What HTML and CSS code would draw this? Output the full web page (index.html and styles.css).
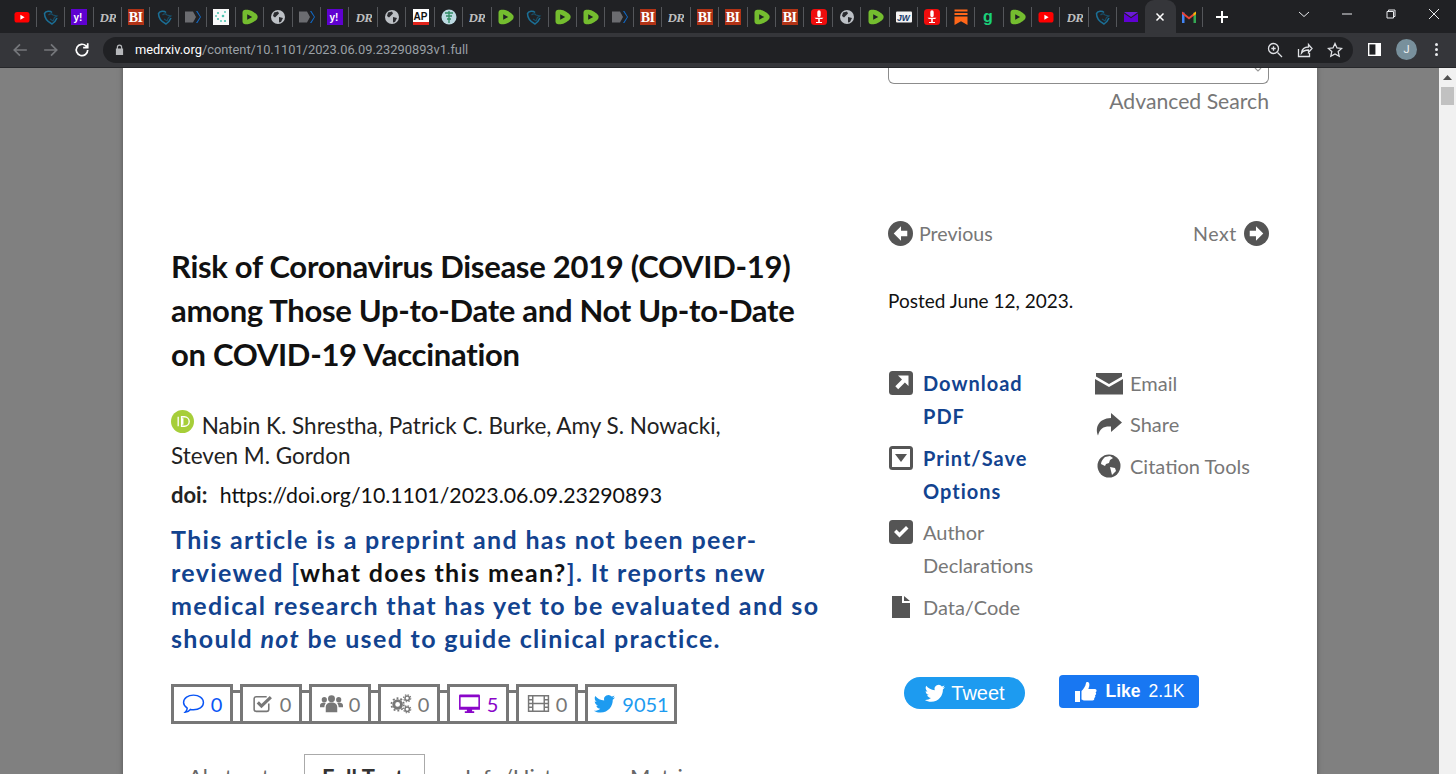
FILE: index.html
```html
<!DOCTYPE html>
<html lang="en">
<head>
<meta charset="utf-8">
<title>Risk of Coronavirus Disease 2019 (COVID-19)</title>
<link rel="stylesheet" href="styles.css">
</head>
<body>
<svg class="defs" width="0" height="0" aria-hidden="true">
  <symbol id="yt" viewBox="0 0 16 16"><rect x="0.5" y="3" width="15" height="10.5" rx="2.6" fill="#f00"/><path d="M6.4 5.8v4.9l4.2-2.45z" fill="#fff"/></symbol>
  <symbol id="shield" viewBox="0 0 16 16"><path d="M9 3.500C7 1.500 3 2 1.500 4.500 1.500 9 4 12.500 9 15c2-1.500 4-3.500 5-6" fill="none" stroke="#1b6f96" stroke-width="1.500"/><path d="M5.500 6C7 4.500 9 4.500 10 6l4 1-2.500 1.500L10 12 7 10" fill="none" stroke="#174e68" stroke-width="1.100"/></symbol>
  <symbol id="yh" viewBox="0 0 16 16"><rect width="16" height="16" fill="#5f01d1"/><text x="2.5" y="11.5" class="ft yh">y!</text></symbol>
  <symbol id="dr" viewBox="0 0 16 16"><text x="-0.5" y="12.500" class="ft dr">DR</text></symbol>
  <symbol id="bi" viewBox="0 0 16 16"><rect width="16" height="16" fill="#b23316"/><text x="0.7" y="13.2" class="ft bi">BI</text></symbol>
  <symbol id="ms" viewBox="0 0 16 16"><path d="M0 2.5h8l3 5.5-3 5.5H0z" fill="#6b6c70"/><path d="M11 2l4 6-4 6h1.4l3.6-6-3.6-6z" fill="#1168c4"/></symbol>
  <symbol id="mol" viewBox="0 0 16 16"><rect width="16" height="16" fill="#fafafa"/><g fill="#4cc3b0"><circle cx="5" cy="4" r="1.1"/><circle cx="10" cy="7" r="1.3"/><circle cx="5" cy="10" r="1.1"/><circle cx="12" cy="12" r="1.1"/><circle cx="8" cy="12" r="0.9"/><circle cx="12" cy="3" r="0.9"/><circle cx="3" cy="7" r="0.9"/></g></symbol>
  <symbol id="rm" viewBox="0 0 16 16"><path d="M3.3 0.8h2.4c3 0 8.5 3.6 9.5 5.5.6 1.1.6 2.3 0 3.4-1 1.9-6.500 5.500-9.500 5.500H3.300C1.800 15.200 0.500 14 0.500 12.500v-9C0.500 2 1.800 0.800 3.300 0.800z" fill="#74bd2f"/><path d="M5.200 5.200v5.600L10.200 8z" fill="#1f2024"/></symbol>
  <symbol id="gl" viewBox="0 0 16 16"><circle cx="8" cy="8" r="7" fill="#bdc1c6"/><path d="M4 3.500l4-1 1 2-2.500 2.500-1.500 1.500-2-1.500zM9 8l4 1-2 4-2 .5z" fill="#2a2b2f"/></symbol>
  <symbol id="ap" viewBox="0 0 16 16"><rect width="16" height="16" fill="#fff"/><rect y="13" width="16" height="3" fill="#e2231a"/><text x="0.6" y="11.200" class="ft ap">AP</text></symbol>
  <symbol id="med" viewBox="0 0 16 16"><circle cx="8" cy="8" r="7.500" fill="#bcd9e2"/><path d="M8 2v12M4 4h8M5 7h6M6 10h4" stroke="#2f8b63" stroke-width="1.300"/></symbol>
  <symbol id="red" viewBox="0 0 16 16"><rect width="16" height="16" rx="3.500" fill="#ef0d0d"/><path d="M6.300 3a1.700 1.700 0 013.400 0v3.500a1.700 1.700 0 01-3.400 0zM3.500 8.800h9L11 10H5zM7.200 10h1.600v3.800H7.200zM5 13h6v1H5z" fill="#fff"/></symbol>
  <symbol id="jw" viewBox="0 0 16 16"><rect y="2.500" width="16" height="11" rx="1" fill="#f4f4f4"/><text x="1" y="11.500" class="ft jw">JW</text></symbol>
  <symbol id="sub" viewBox="0 0 16 16"><path d="M1.500 0.500h13v2h-13zM1.500 4h13v2h-13zM1.500 7.500h13V16L8 12.300 1.500 16z" fill="#ff6719"/></symbol>
  <symbol id="g" viewBox="0 0 16 16"><text x="2" y="12.500" class="ft gg">g</text></symbol>
  <symbol id="mail" viewBox="0 0 16 16"><path d="M1 3h14L8 8z" fill="#6b1bd6"/><path d="M1 4.500l7 4.800 7-4.800V13H1z" fill="#6001d2"/></symbol>
  <symbol id="gm" viewBox="0 0 16 16"><path d="M1 3.500h2.500V14H1z" fill="#4285f4"/><path d="M12.500 3.500H15V14h-2.500z" fill="#34a853"/><path d="M1 2.500l7 5.500 7-5.500V5L8 10.500 1 5z" fill="#ea4335"/><path d="M12.500 4.500L15 2.500V5l-2.500 2z" fill="#fbbc04"/></symbol>
</svg>

<header class="chrome">
  <div class="tabstrip">
    <div class="tab"><svg class="fav"><use href="#yt"/></svg></div>
    <div class="tab"><svg class="fav"><use href="#shield"/></svg></div>
    <div class="tab"><svg class="fav"><use href="#yh"/></svg></div>
    <div class="tab"><svg class="fav"><use href="#dr"/></svg></div>
    <div class="tab"><svg class="fav"><use href="#bi"/></svg></div>
    <div class="tab"><svg class="fav"><use href="#shield"/></svg></div>
    <div class="tab"><svg class="fav"><use href="#ms"/></svg></div>
    <div class="tab"><svg class="fav"><use href="#mol"/></svg></div>
    <div class="tab"><svg class="fav"><use href="#rm"/></svg></div>
    <div class="tab"><svg class="fav"><use href="#gl"/></svg></div>
    <div class="tab"><svg class="fav"><use href="#ms"/></svg></div>
    <div class="tab"><svg class="fav"><use href="#yh"/></svg></div>
    <div class="tab"><svg class="fav"><use href="#dr"/></svg></div>
    <div class="tab"><svg class="fav"><use href="#gl"/></svg></div>
    <div class="tab"><svg class="fav"><use href="#ap"/></svg></div>
    <div class="tab"><svg class="fav"><use href="#med"/></svg></div>
    <div class="tab"><svg class="fav"><use href="#dr"/></svg></div>
    <div class="tab"><svg class="fav"><use href="#rm"/></svg></div>
    <div class="tab"><svg class="fav"><use href="#shield"/></svg></div>
    <div class="tab"><svg class="fav"><use href="#rm"/></svg></div>
    <div class="tab"><svg class="fav"><use href="#rm"/></svg></div>
    <div class="tab"><svg class="fav"><use href="#ms"/></svg></div>
    <div class="tab"><svg class="fav"><use href="#bi"/></svg></div>
    <div class="tab"><svg class="fav"><use href="#dr"/></svg></div>
    <div class="tab"><svg class="fav"><use href="#bi"/></svg></div>
    <div class="tab"><svg class="fav"><use href="#bi"/></svg></div>
    <div class="tab"><svg class="fav"><use href="#rm"/></svg></div>
    <div class="tab"><svg class="fav"><use href="#bi"/></svg></div>
    <div class="tab"><svg class="fav"><use href="#red"/></svg></div>
    <div class="tab"><svg class="fav"><use href="#gl"/></svg></div>
    <div class="tab"><svg class="fav"><use href="#rm"/></svg></div>
    <div class="tab"><svg class="fav"><use href="#jw"/></svg></div>
    <div class="tab"><svg class="fav"><use href="#red"/></svg></div>
    <div class="tab"><svg class="fav"><use href="#sub"/></svg></div>
    <div class="tab"><svg class="fav"><use href="#g"/></svg></div>
    <div class="tab"><svg class="fav"><use href="#rm"/></svg></div>
    <div class="tab"><svg class="fav"><use href="#yt"/></svg></div>
    <div class="tab"><svg class="fav"><use href="#dr"/></svg></div>
    <div class="tab"><svg class="fav"><use href="#shield"/></svg></div>
    <div class="tab tab-clear"><svg class="fav"><use href="#mail"/></svg></div>
    <div class="tab tab-active"><svg class="close-x" viewBox="0 0 10 10"><path d="M1.500 1.500l7 7M8.500 1.500l-7 7"/></svg></div>
    <div class="tab"><svg class="fav"><use href="#gm"/></svg></div>
    <div class="newtab"><svg viewBox="0 0 12 12"><path d="M6 0v12M0 6h12"/></svg></div>
    <div class="winbtns">
      <svg class="win" viewBox="0 0 12 12"><path d="M1 4l5 4.500L11 4"/></svg>
      <svg class="win" viewBox="0 0 12 12"><path d="M1 6h10"/></svg>
      <svg class="win" viewBox="0 0 12 12"><path d="M2 3.500h6.500V10H2zM3.500 3.500V2h6.500v6.500H8.500"/></svg>
      <svg class="win" viewBox="0 0 12 12"><path d="M1 1l10 10M11 1L1 11"/></svg>
    </div>
  </div>
  <div class="toolbar">
    <svg class="nav dim" viewBox="0 0 14 14"><path d="M13 7H2M7 2L2 7l5 5"/></svg>
    <svg class="nav dim" viewBox="0 0 14 14"><path d="M1 7h11M7 2l5 5-5 5"/></svg>
    <svg class="nav" viewBox="0 0 14 14"><path d="M12 7a5 5 0 11-1.500-3.600L12 5M12 1v4H8"/></svg>
    <div class="omnibox">
      <svg class="lock" viewBox="0 0 10 12"><path d="M2 5V3.500a3 3 0 016 0V5h1v7H1V5zM3.300 5h3.400V3.500a1.700 1.700 0 00-3.400 0z"/></svg>
      <span class="url"><span class="host">medrxiv.org</span>/content/10.1101/2023.06.09.23290893v1.full</span>
      <div class="omni-icons">
        <svg class="tool" viewBox="0 0 16 16"><circle cx="6.500" cy="6.500" r="5"/><path d="M10.500 10.500L15 15M4.300 6.500h4.400M6.500 4.300v4.400"/></svg>
        <svg class="tool" viewBox="0 0 16 16"><path d="M1.500 7v7.500h11V11M4.500 11c.5-4 3-6 7-6V2.500L15 6.500l-3.500 4V8c-3 0-5.500 1-7 3z"/></svg>
        <svg class="tool" viewBox="0 0 16 16"><path d="M8 1.500l2 4.400 4.700.5-3.500 3.200 1 4.700L8 11.900l-4.200 2.400 1-4.700L1.300 6.400 6 5.900z"/></svg>
      </div>
    </div>
    <div class="tb-right">
      <svg class="panel" viewBox="0 0 14 14"><rect x="0.750" y="0.750" width="12.500" height="12.500" fill="#202124" stroke="#fff" stroke-width="1.500"/><rect x="8" y="1" width="5" height="12" fill="#fff"/></svg>
      <span class="avatar">J</span>
      <span class="dots"><i></i><i></i><i></i></span>
    </div>
  </div>
</header>

<div class="viewport">
  <div class="backdrop">
    <main class="page">
      <article class="article">
        <h1 class="title">Risk of Coronavirus Disease 2019 (COVID-19) among Those Up-to-Date and Not Up-to-Date on COVID-19 Vaccination</h1>
        <p class="authors"><svg class="orcid" viewBox="0 0 24 24"><circle cx="12" cy="12" r="12" fill="#a6ce39"/><path d="M7.500 7v10M11 7h3a5 5 0 010 10h-3zM12.300 8.500v7" fill="none" stroke="#fff" stroke-width="1.400"/></svg> Nabin K. Shrestha, Patrick C. Burke, Amy S. Nowacki, Steven M. Gordon</p>
        <p class="doi"><b>doi:</b> https://doi.org/10.1101/2023.06.09.23290893</p>
        <p class="notice">This article is a preprint and has not been peer-reviewed [<span class="notice-link">what does this mean?</span>]. It reports new medical research that has yet to be evaluated and so should <em>not</em> be used to guide clinical practice.</p>
        <div class="badges">
          <div class="badge b-blue"><svg viewBox="0 0 22 22"><path d="M11 3c5 0 9.500 2.500 9.500 7s-4.500 7-9.500 7c-1 0-2 0-3-.300C6.500 18.500 4.500 19.500 3 19.500c1-1 2-2.500 2-4C3 14 1.500 12.500 1.500 10 1.500 5.500 6 3 11 3z" fill="none" stroke="currentColor" stroke-width="1.400"/></svg>0</div>
          <div class="badge"><svg viewBox="0 0 22 22"><path d="M17 11v5.500a2 2 0 01-2 2H5a2 2 0 01-2-2V6.500a2 2 0 012-2h10" fill="none" stroke="currentColor" stroke-width="1.500"/><path d="M6.500 10l3.500 3.500L19 5" fill="none" stroke="currentColor" stroke-width="3"/></svg>0</div>
          <div class="badge"><svg viewBox="0 0 24 22"><g fill="currentColor"><circle cx="12" cy="6" r="3.600"/><circle cx="4.500" cy="7" r="2.700"/><circle cx="19.500" cy="7" r="2.700"/><path d="M6 20v-5c0-3 2-5 6-5s6 2 6 5v5zM0 15v-2c0-2 2-3 4.500-3l1.500.500C5 12 4.500 13.500 4.500 15zM24 15v-2c0-2-2-3-4.500-3l-1.500.500c1 1.500 1.500 3 1.500 4.500z"/></g></svg>0</div>
          <div class="badge"><svg viewBox="0 0 24 22"><g fill="none" stroke="currentColor"><circle cx="9" cy="12" r="4" stroke-width="3"/><circle cx="9" cy="12" r="6.500" stroke-width="1.800" stroke-dasharray="2 2.100"/><circle cx="19" cy="5.500" r="2.300" stroke-width="1.500"/><circle cx="19" cy="5.500" r="3.700" stroke-width="1.200" stroke-dasharray="1.500 1.400"/><circle cx="19" cy="17" r="2.300" stroke-width="1.500"/><circle cx="19" cy="17" r="3.700" stroke-width="1.200" stroke-dasharray="1.500 1.400"/></g></svg>0</div>
          <div class="badge b-purple"><svg viewBox="0 0 22 22"><path fill-rule="evenodd" d="M1 3.500a1 1 0 011-1h18a1 1 0 011 1V17H1zM2.500 5v9h17V5zM8.500 17h5v1.500h2V20h-9v-1.500h2z" fill="currentColor"/></svg>5</div>
          <div class="badge"><svg viewBox="0 0 22 22"><path d="M1.500 3.500h19v15h-19zM5.500 3.500v15M16.500 3.500v15M5.500 11h11M1.500 7.500h4M1.500 11h4M1.500 14.500h4M16.500 7.500h4M16.500 11h4M16.500 14.500h4" fill="none" stroke="currentColor" stroke-width="1.400"/></svg>0</div>
          <div class="badge b-sky"><svg viewBox="0 0 24 24"><path d="M23 5.500c-.8.400-1.700.600-2.600.700.900-.6 1.600-1.400 2-2.500-.900.500-1.800.900-2.900 1.100a4.500 4.500 0 00-7.800 4.100C7.900 8.700 4.600 6.900 2.400 4.200c-1.200 2.100-.6 4.800 1.400 6.100-.7 0-1.400-.2-2-.6 0 2.200 1.500 4.100 3.600 4.500-.7.200-1.400.2-2 .1.600 1.800 2.300 3.100 4.200 3.100C5.700 19 3.200 19.700.9 19.500c2 1.300 4.400 2 6.900 2 8.400 0 13.100-7.100 12.800-13.400.9-.6 1.700-1.500 2.400-2.600z" fill="currentColor"/></svg>9051</div>
        </div>
        <nav class="tabs">
          <a class="tablink">Abstract</a>
          <a class="tablink current">Full Text</a>
          <a class="tablink">Info/History</a>
          <a class="tablink">Metrics</a>
        </nav>
      </article>

      <aside class="side">
        <div class="searchbox"><svg class="search-tip" viewBox="0 0 8 4"><path d="M1 0l3 3 3-3" fill="none" stroke="#999" stroke-width="1.200"/></svg></div>
        <a class="advanced">Advanced Search</a>
        <div class="pager">
          <a class="pg pg-prev"><svg class="circ" viewBox="0 0 24 24"><circle cx="12" cy="12" r="12" fill="#555"/><path d="M12.500 5L5.500 12l7 7v-4.300h6v-5.400h-6z" fill="#fff"/></svg>Previous</a>
          <a class="pg pg-next">Next<svg class="circ" viewBox="0 0 24 24"><circle cx="12" cy="12" r="12" fill="#555"/><path d="M11.500 5l7 7-7 7v-4.300h-6v-5.400h6z" fill="#fff"/></svg></a>
        </div>
        <p class="posted">Posted June 12, 2023.</p>
        <div class="actions">
          <ul class="acol acol-l">
            <li class="act strong"><svg class="aico" viewBox="0 0 24 24"><rect width="24" height="24" rx="3.500" fill="#555"/><path d="M9 4.500h10.500V15l-3.600-3.600-6.700 6.800-2.900-2.900 6.700-6.800z" fill="#fff"/></svg>Download PDF</li>
            <li class="act strong"><svg class="aico" viewBox="0 0 24 24"><rect width="24" height="24" rx="3.500" fill="#555"/><rect x="3" y="3" width="18" height="18" fill="#fff"/><path d="M6 8h12l-6 8z" fill="#555"/></svg>Print/Save Options</li>
            <li class="act"><svg class="aico" viewBox="0 0 24 24"><rect width="24" height="24" rx="3.500" fill="#555"/><path d="M5 12l2.500-2.500 3 3 6.500-6.500 2.500 2.500-9 9z" fill="#fff"/></svg>Author Declarations</li>
            <li class="act"><svg class="aico" viewBox="0 0 24 24"><path d="M3 1h10v7h8v15H3zM15 1l6 5h-6z" fill="#555"/></svg>Data/Code</li>
          </ul>
          <ul class="acol acol-r">
            <li class="act"><svg class="aico wide" viewBox="0 0 28 24"><path d="M1 2h26v3.500L14 13 1 5.500zM0 8l14 8 14-8v15.500H0z" fill="#555"/></svg>Email</li>
            <li class="act"><svg class="aico wide" viewBox="0 0 28 24"><path d="M16 1l11 9.500L16 20v-5.500C9 14 5 16 3 23.500 0 16 3 6.500 16 6z" fill="#555"/></svg>Share</li>
            <li class="act"><svg class="aico wide" viewBox="0 0 28 24"><circle cx="14" cy="12" r="11.500" fill="#555"/><path d="M10 3l5-1 3 2-3 2-1 3-3 1-1 2-4-2c0-3 2-5 4-7zM15 13l5 1 1 3-4 4-1-4z" fill="#fff"/></svg>Citation Tools</li>
          </ul>
        </div>
        <div class="social">
          <a class="tweet"><svg viewBox="0 0 24 24"><path d="M23 5.500c-.8.400-1.700.600-2.600.700.900-.6 1.600-1.400 2-2.500-.900.500-1.800.900-2.900 1.100a4.500 4.500 0 00-7.800 4.100C7.900 8.700 4.600 6.900 2.400 4.200c-1.200 2.100-.6 4.800 1.400 6.100-.7 0-1.400-.2-2-.6 0 2.200 1.500 4.100 3.600 4.500-.7.200-1.400.2-2 .1.600 1.800 2.300 3.100 4.200 3.100C5.700 19 3.200 19.700.9 19.500c2 1.300 4.400 2 6.900 2 8.400 0 13.100-7.100 12.800-13.400.9-.6 1.700-1.500 2.400-2.600z" fill="#fff"/></svg>Tweet</a>
          <a class="like"><svg viewBox="0 0 24 24"><path d="M1 11h5v11H1zM7.500 11c2-2 4-4.500 4.500-8 .2-1.500 3-1.500 3.300.7.300 1.800-.3 3.800-1 5.300H21c2 0 2 3 .5 3.300 1 .8.800 2.700-.5 3 .7.900.3 2.400-.8 2.700.4 1.200-.2 2.500-1.700 2.500H11c-1.500 0-2.500-.5-3.500-1z" fill="#fff"/></svg><b>Like</b> 2.1K</a>
        </div>
      </aside>
    </main>
  </div>
  <div class="scrollbar">
    <svg class="sb-arrow" viewBox="0 0 9 5"><path d="M4.500 0L9 5H0z"/></svg>
    <div class="sb-thumb"></div>
  </div>
</div>
</body>
</html>
```
FILE: styles.css
```css
* { box-sizing: border-box; }
html, body { margin: 0; height: 100%; overflow: hidden; }
body { display: flex; flex-direction: column; font-family: "Lato", "Noto Sans", sans-serif; background: #808080; }
.defs { position: absolute; }
ul { list-style: none; margin: 0; padding: 0; }
p { margin: 0; }

/* browser chrome */
.chrome { flex: none; background: #202124; }
.tabstrip { height: 33px; display: flex; padding-left: 8.2px; align-items: stretch; }
.tab { width: 28.45px; flex: none; display: flex; align-items: center; justify-content: center; position: relative; }
.tab::after { content: ""; position: absolute; right: 0; top: 7px; height: 20px; width: 1px; background: #54565a; }
.tab-clear::after, .tab-active::after { display: none; }
.tab-active { background: #35363a; border-radius: 9px 9px 0 0; width: 31px; margin: 0 -1px; }
.fav { width: 16px; height: 16px; }
.close-x { width: 10px; height: 10px; fill: none; stroke: #fff; stroke-width: 1.500; }
.ft { font-weight: 700; }
.yh { font-family: "Liberation Sans", sans-serif; font-size: 10px; fill: #fff; }
.dr { font-family: "Liberation Serif", serif; font-style: italic; font-size: 13px; fill: #bdbdbd; letter-spacing: -.6px; }
.bi { font-family: "Liberation Serif", serif; font-size: 14px; fill: #fff; letter-spacing: -.5px; }
.ap { font-family: "Liberation Sans", sans-serif; font-size: 10px; fill: #111; }
.jw { font-family: "Liberation Sans", sans-serif; font-size: 8.500px; fill: #143a6b; font-style: italic; }
.gg { font-family: "Liberation Sans", sans-serif; font-size: 16px; fill: #1ad07a; }
.newtab { width: 14px; margin-left: 13px; display: flex; align-items: center; }
.newtab svg { width: 12px; height: 12px; fill: none; stroke: #fff; stroke-width: 2; }
.winbtns { flex: 1; display: flex; align-items: center; justify-content: flex-end; gap: 31.500px; padding-right: 16px; padding-bottom: 5px; }
.win { width: 12px; height: 12px; fill: none; stroke: #e8eaed; stroke-width: 1; }
.toolbar { height: 34.500px; background: #35363a; display: flex; align-items: center; padding: 0 0 0 12px; border-bottom: 1px solid #26272a; }
.nav { width: 16px; height: 16px; fill: none; stroke: #fff; stroke-width: 1.500; margin-right: 15px; }
.nav.dim { stroke: #75777b; }
.omnibox { width: 1250px; margin-left: -2px; height: 26px; border-radius: 13px; background: #202124; display: flex; align-items: center; padding: 0 10px 0 12px; }
.lock { width: 9px; height: 11px; fill: #b5b7ba; flex: none; }
.url { margin-left: 11px; font-family: "Roboto", sans-serif; font-size: 12.850px; color: #9aa0a6; white-space: nowrap; }
.host { color: #fff; }
.omni-icons { margin-left: auto; display: flex; gap: 14px; }
.tool { width: 16px; height: 16px; fill: none; stroke: #dfe1e5; stroke-width: 1.300; }
.tb-right { display: flex; align-items: center; padding-left: 15px; }
.panel { width: 13px; height: 13px; }
.avatar { width: 21px; height: 21px; margin-left: 15px; border-radius: 50%; background: #78909c; color: #eef1f3; font-family: "Roboto", sans-serif; font-size: 11px; display: flex; align-items: center; justify-content: center; }
.dots { display: flex; flex-direction: column; gap: 2px; margin-left: 18px; }
.dots i { width: 3px; height: 3px; border-radius: 50%; background: #e8eaed; }

/* page */
.viewport { flex: 1; min-height: 0; display: flex; }
.backdrop { flex: 1; padding-left: 123px; background: #808080; overflow: hidden; }
.page { width: 1194px; height: 800px; background: #fff; display: flex; padding: 0 48px; box-shadow: 0 0 4px 1px #606060; }

.article { width: 717px; flex: none; padding-top: 176px; }
.title { margin: 0; width: 640px; font-size: 31px; line-height: 44px; font-weight: 700; color: #111; letter-spacing: -.29px; }
.authors { margin-top: 34px; width: 560px; font-size: 22.500px; line-height: 30px; color: #222; }
.orcid { width: 23px; height: 23px; vertical-align: 1px; margin-right: 2px; }
.doi { margin-top: 9px; font-size: 21.300px; line-height: 30px; color: #111; }
.doi b { color: #222; font-size: 22px; margin-right: 7px; }
.notice { margin-top: 13px; width: 660px; font-size: 25px; line-height: 33.300px; font-weight: 700; color: #12438f; letter-spacing: 1.350px; }
.notice-link { color: #111; }
.notice em { font-style: italic; }
.badges { margin-top: 28px; display: flex; gap: 7px; }
.badge { width: 62px; height: 40px; border: 3px solid #777; display: flex; align-items: center; justify-content: center; gap: 6px; font-size: 20px; color: #777; position: relative; background: #fff; }
.badge svg { width: 23px; height: 23px; flex: none; }
.badge + .badge::before { content: ""; position: absolute; left: -10px; top: 3px; width: 7px; height: 28px; border: solid #777; border-width: 3px 0; }
.b-blue { color: #0a55f5; }
.b-purple { color: #8a05c9; }
.b-sky { width: 92px; color: #1d9bf0; }
.tabs { margin-top: 30px; display: flex; align-items: flex-start; font-size: 22px; color: #666; }
.tablink { padding: 9px 17px; width: 133px; }
.tablink.current { width: 121px; border: 1px solid #aaa; border-bottom: 0; height: 60px; font-weight: 700; color: #333; margin-right: 23px; }
.tablink:nth-child(3) { width: 165px; }

.side { width: 381px; flex: none; }
.searchbox { height: 16px; border: 1.500px solid #8c8c8c; border-top: 0; border-radius: 0 0 6px 6px; position: relative; }
.search-tip { position: absolute; right: 6px; top: 0; width: 8px; height: 4px; }
.advanced { display: block; margin-top: 2px; text-align: right; font-size: 21.200px; line-height: 30px; color: #777; }
.pager { margin-top: 103px; display: flex; justify-content: space-between; font-size: 19.600px; line-height: 30px; color: #777; }
.pg { display: flex; align-items: center; gap: 7px; }
.pg-prev { gap: 6px; }
.pg-next { letter-spacing: .6px; }
.circ { width: 25px; height: 25px; }
.posted { margin-top: 37px; font-size: 19px; line-height: 30px; color: #111; }
.actions { margin-top: 51px; display: flex; }
.acol-l { width: 207px; }
.acol-r { flex: 1; }
.act { position: relative; font-size: 20px; line-height: 33.300px; color: #777; margin-bottom: 8.500px; }
.acol-l .act { padding-left: 35px; width: 150px; }
.acol-r .act { padding-left: 35px; }
.strong { color: #12438f; font-weight: 700; letter-spacing: 1px; margin-bottom: 9px; }
.strong + .strong { margin-bottom: 7.500px; }
.aico { position: absolute; left: 1px; top: 4px; width: 24px; height: 24px; }
.aico.wide { left: 0; width: 28px; }
.social { margin-top: 42px; display: flex; align-items: flex-start; padding-left: 16px; font-family: "Liberation Sans", sans-serif; color: #fff; }
.tweet { width: 121px; height: 32px; margin-top: 2px; border-radius: 16px; background: #1d9bf0; display: flex; align-items: center; justify-content: center; gap: 5px; font-size: 20px; }
.tweet svg { width: 22px; height: 22px; }
.like { width: 140px; height: 33px; margin-left: 34px; border-radius: 4px; background: #1877f2; display: flex; align-items: center; justify-content: center; gap: 3px; font-size: 17.500px; white-space: pre; }
.like svg { width: 24px; height: 24px; margin-right: 5px; }

.scrollbar { width: 17px; background: #f1f1f1; flex: none; display: flex; flex-direction: column; align-items: center; }
.sb-arrow { width: 9px; height: 5px; margin-top: 7px; fill: #505050; }
.sb-thumb { width: 13px; height: 18px; margin-top: 7px; background: #c1c1c1; }
```
